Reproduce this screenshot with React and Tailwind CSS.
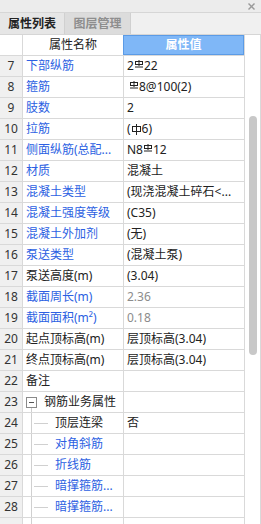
import React from "react";

function RebarC() {
  return (
    <svg width="10" height="8" viewBox="0 0 10 8" className="mb-[4px] shrink-0" fill="none" stroke="#222" strokeWidth="1">
      <line x1="5" y1="0" x2="5" y2="6" />
      <rect x="1.5" y="1.5" width="7" height="3" />
      <line x1="1" y1="7" x2="9" y2="7" />
    </svg>
  );
}

function RebarA() {
  return (
    <svg width="11" height="11" viewBox="0 0 11 11" className="shrink-0" fill="none" stroke="#222" strokeWidth="1">
      <line x1="5.5" y1="0" x2="5.5" y2="11" />
      <rect x="1.5" y="2.5" width="8" height="5" />
    </svg>
  );
}

const BLUE = "text-[#2c5fe2]";
const BLACK = "text-[#222]";

const rows = [
  { n: 7, name: "下部纵筋", c: BLUE, v: <>2<RebarC />22</> },
  { n: 8, name: "箍筋", c: BLUE, v: <><span className="ml-[2px]" /><RebarC />8@100(2)</> },
  { n: 9, name: "肢数", c: BLUE, v: <>2</> },
  { n: 10, name: "拉筋", c: BLUE, v: <>(<RebarA />6)</> },
  { n: 11, name: "侧面纵筋(总配...", c: BLUE, v: <>N8<RebarC />12</> },
  { n: 12, name: "材质", c: BLUE, v: <>混凝土</> },
  { n: 13, name: "混凝土类型", c: BLUE, v: <>(现浇混凝土碎石&lt;...</> },
  { n: 14, name: "混凝土强度等级", c: BLUE, v: <>(C35)</> },
  { n: 15, name: "混凝土外加剂", c: BLUE, v: <>(无)</> },
  { n: 16, name: "泵送类型", c: BLUE, v: <>(混凝土泵)</> },
  { n: 17, name: "泵送高度(m)", c: BLACK, v: <>(3.04)</> },
  { n: 18, name: "截面周长(m)", c: BLUE, v: <span className="text-[#8c8c8c]">2.36</span> },
  { n: 19, name: "截面面积(m²)", c: BLUE, v: <span className="text-[#8c8c8c]">0.18</span> },
  { n: 20, name: "起点顶标高(m)", c: BLACK, v: <>层顶标高(3.04)</> },
  { n: 21, name: "终点顶标高(m)", c: BLACK, v: <>层顶标高(3.04)</> },
  { n: 22, name: "备注", c: BLACK, v: null },
  { n: 23, name: "钢筋业务属性", c: BLACK, v: null, group: true },
  { n: 24, name: "顶层连梁", c: BLACK, v: <>否</>, child: true },
  { n: 25, name: "对角斜筋", c: BLUE, v: null, child: true },
  { n: 26, name: "折线筋", c: BLUE, v: null, child: true },
  { n: 27, name: "暗撑箍筋...", c: BLUE, v: null, child: true },
  { n: 28, name: "暗撑箍筋...", c: BLUE, v: null, child: true },
];

function Row({ r }) {
  return (
    <div className="flex h-[21px] shrink-0 border-b border-[#d9d9d9]">
      <div className="w-[23px] shrink-0 bg-[#f0f0f0] border-r border-[#d9d9d9] flex items-center justify-center text-[#333]">
        {r.n}
      </div>
      <div className={`w-[101px] shrink-0 border-r border-[#d9d9d9] flex items-center whitespace-nowrap overflow-hidden ${r.c}`}>
        {r.group ? (
          <>
            <div className="w-[12px] ml-[2px] h-full flex flex-col items-center shrink-0">
              <div className="flex-1" />
              <div className="w-[11px] h-[11px] border border-[#8a8a8a] flex items-center justify-center bg-white">
                <div className="w-[5px] h-px bg-[#555]" />
              </div>
              <div className="flex-1 w-px bg-[#d0d0d0]" />
            </div>
            <span className="ml-[7px]">{r.name}</span>
          </>
        ) : r.child ? (
          <>
            <div className="w-[8px] shrink-0" />
            <div className="w-px h-full bg-[#d0d0d0] shrink-0" />
            <div className="w-[14px] h-px bg-[#d0d0d0] ml-[2px] shrink-0" />
            <span className="ml-[7px]">{r.name}</span>
          </>
        ) : (
          <span className="pl-[3px]">{r.name}</span>
        )}
      </div>
      <div className="flex-1 flex items-center pl-[3px] whitespace-nowrap overflow-hidden text-[#222]">
        {r.v}
      </div>
    </div>
  );
}

export default function App() {
  return (
    <div className="w-[261px] h-[524px] bg-white flex flex-col overflow-hidden text-[12px] leading-none font-['Noto_Sans','Noto_Sans_CJK_SC',sans-serif]">
      <div className="h-[13px] shrink-0 bg-[#ececec] border-b border-[#d6d6d6] flex items-center justify-end pr-[6px]">
        <svg width="7" height="7" viewBox="0 0 7 7" stroke="#9a9a9a" strokeWidth="1.4">
          <line x1="0.5" y1="0.5" x2="6.5" y2="6.5" />
          <line x1="6.5" y1="0.5" x2="0.5" y2="6.5" />
        </svg>
      </div>
      <div className="h-[22px] shrink-0 bg-[#f0f0f0] border-b border-[#d6d6d6] flex">
        <div className="w-[65px] bg-[#e6e6e6] border-r border-[#d0d0d0] flex items-center justify-center font-bold text-[#222]">
          属性列表
        </div>
        <div className="w-[66px] bg-[#dcdcdc] border-r border-[#d0d0d0] flex items-center justify-center font-bold text-[#8e8e8e]">
          图层管理
        </div>
      </div>
      <div className="flex-1 flex min-h-0">
        <div className="w-[245px] shrink-0 border-r border-[#d9d9d9] flex flex-col overflow-hidden">
          <div className="flex h-[21px] shrink-0 border-b border-[#d9d9d9]">
            <div className="w-[23px] shrink-0 border-r border-[#d9d9d9]" />
            <div className="w-[100px] shrink-0 flex items-center justify-center text-[#222]">属性名称</div>
            <div className="flex-1 bg-[#7fb7f7] border border-[#5b9be6] flex items-center justify-center text-white font-bold">
              属性值
            </div>
          </div>
          {rows.map((r) => (
            <Row key={r.n} r={r} />
          ))}
          <div className="flex flex-1">
            <div className="w-[23px] shrink-0 bg-[#f0f0f0] border-r border-[#d9d9d9]" />
            <div className="w-[101px] shrink-0 border-r border-[#d9d9d9] flex">
              <div className="w-[8px] shrink-0" />
              <div className="w-px h-full bg-[#d0d0d0]" />
            </div>
            <div className="flex-1" />
          </div>
        </div>
        <div className="w-[16px] shrink-0 border-r border-[#d9d9d9] pt-[81px] pl-[4px]">
          <div className="w-[8px] h-[239px] rounded-full bg-[#c8c8c8]" />
        </div>
      </div>
    </div>
  );
}
